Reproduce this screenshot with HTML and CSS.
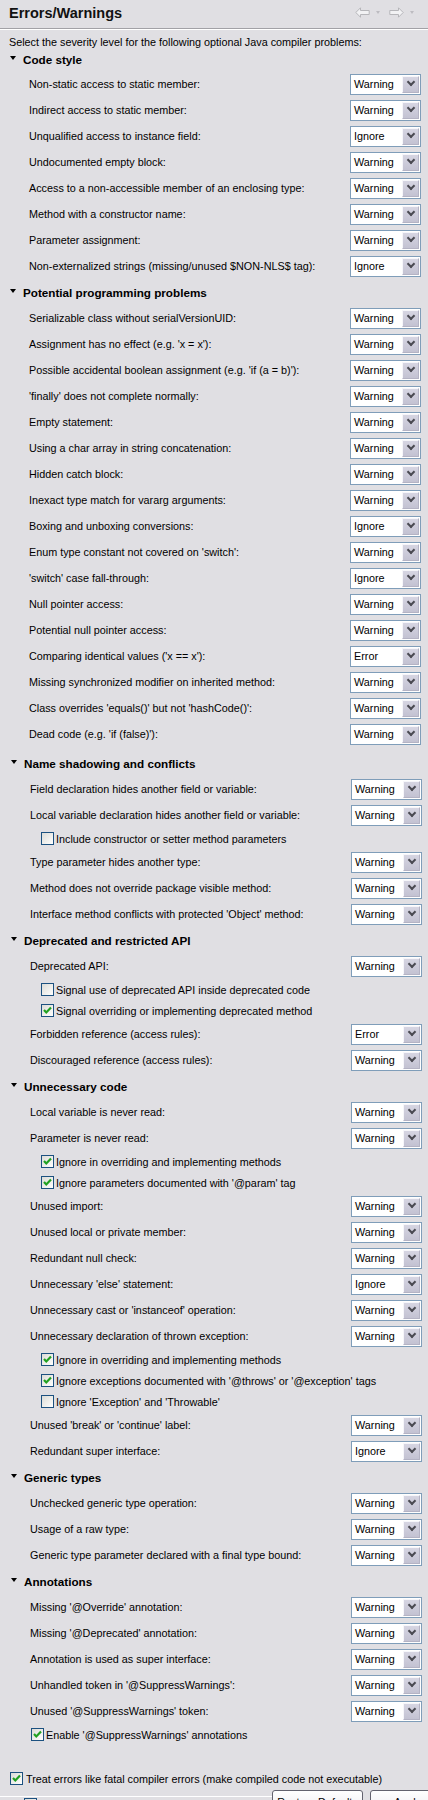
FILE: index.html
```html
<!DOCTYPE html>
<html lang="en">
<head>
<meta charset="utf-8">
<title>Errors/Warnings</title>
<link rel="stylesheet" href="styles.css">
</head>
<body>
<div class="page">
  <header class="titlebar">
    <h1 class="title">Errors/Warnings</h1>
    <div class="nav">
      <svg class="nav-arrow" width="15" height="11" viewBox="0 0 15 11"><path d="M0.8 5.5 L5.5 0.8 V3.5 H14.2 V7.5 H5.5 V10.2 Z" fill="#f2f2f4" stroke="#b6b6ba" stroke-width="1" stroke-linejoin="round"/></svg>
      <span class="nav-drop"></span>
      <svg class="nav-arrow nav-next" width="15" height="11" viewBox="0 0 15 11"><path d="M14.2 5.5 L9.5 0.8 V3.5 H0.8 V7.5 H9.5 V10.2 Z" fill="#f2f2f4" stroke="#b6b6ba" stroke-width="1" stroke-linejoin="round"/></svg>
      <span class="nav-drop"></span>
    </div>
  </header>

  <p class="intro">Select the severity level for the following optional Java compiler problems:</p>

  <section class="group first">
    <h2 class="group-title"><span class="twisty"></span>Code style</h2>
    <div class="row"><span class="label">Non-static access to static member:</span><span class="combo"><span class="combo-value">Warning</span><span class="combo-btn"></span></span></div>
    <div class="row"><span class="label">Indirect access to static member:</span><span class="combo"><span class="combo-value">Warning</span><span class="combo-btn"></span></span></div>
    <div class="row"><span class="label">Unqualified access to instance field:</span><span class="combo"><span class="combo-value">Ignore</span><span class="combo-btn"></span></span></div>
    <div class="row"><span class="label">Undocumented empty block:</span><span class="combo"><span class="combo-value">Warning</span><span class="combo-btn"></span></span></div>
    <div class="row"><span class="label">Access to a non-accessible member of an enclosing type:</span><span class="combo"><span class="combo-value">Warning</span><span class="combo-btn"></span></span></div>
    <div class="row"><span class="label">Method with a constructor name:</span><span class="combo"><span class="combo-value">Warning</span><span class="combo-btn"></span></span></div>
    <div class="row"><span class="label">Parameter assignment:</span><span class="combo"><span class="combo-value">Warning</span><span class="combo-btn"></span></span></div>
    <div class="row"><span class="label">Non-externalized strings (missing/unused $NON-NLS$ tag):</span><span class="combo"><span class="combo-value">Ignore</span><span class="combo-btn"></span></span></div>
  </section>

  <section class="group">
    <h2 class="group-title"><span class="twisty"></span>Potential programming problems</h2>
    <div class="row"><span class="label">Serializable class without serialVersionUID:</span><span class="combo"><span class="combo-value">Warning</span><span class="combo-btn"></span></span></div>
    <div class="row"><span class="label">Assignment has no effect (e.g. 'x = x'):</span><span class="combo"><span class="combo-value">Warning</span><span class="combo-btn"></span></span></div>
    <div class="row"><span class="label">Possible accidental boolean assignment (e.g. 'if (a = b)'):</span><span class="combo"><span class="combo-value">Warning</span><span class="combo-btn"></span></span></div>
    <div class="row"><span class="label">'finally' does not complete normally:</span><span class="combo"><span class="combo-value">Warning</span><span class="combo-btn"></span></span></div>
    <div class="row"><span class="label">Empty statement:</span><span class="combo"><span class="combo-value">Warning</span><span class="combo-btn"></span></span></div>
    <div class="row"><span class="label">Using a char array in string concatenation:</span><span class="combo"><span class="combo-value">Warning</span><span class="combo-btn"></span></span></div>
    <div class="row"><span class="label">Hidden catch block:</span><span class="combo"><span class="combo-value">Warning</span><span class="combo-btn"></span></span></div>
    <div class="row"><span class="label">Inexact type match for vararg arguments:</span><span class="combo"><span class="combo-value">Warning</span><span class="combo-btn"></span></span></div>
    <div class="row"><span class="label">Boxing and unboxing conversions:</span><span class="combo"><span class="combo-value">Ignore</span><span class="combo-btn"></span></span></div>
    <div class="row"><span class="label">Enum type constant not covered on 'switch':</span><span class="combo"><span class="combo-value">Warning</span><span class="combo-btn"></span></span></div>
    <div class="row"><span class="label">'switch' case fall-through:</span><span class="combo"><span class="combo-value">Ignore</span><span class="combo-btn"></span></span></div>
    <div class="row"><span class="label">Null pointer access:</span><span class="combo"><span class="combo-value">Warning</span><span class="combo-btn"></span></span></div>
    <div class="row"><span class="label">Potential null pointer access:</span><span class="combo"><span class="combo-value">Warning</span><span class="combo-btn"></span></span></div>
    <div class="row"><span class="label">Comparing identical values ('x == x'):</span><span class="combo"><span class="combo-value">Error</span><span class="combo-btn"></span></span></div>
    <div class="row"><span class="label">Missing synchronized modifier on inherited method:</span><span class="combo"><span class="combo-value">Warning</span><span class="combo-btn"></span></span></div>
    <div class="row"><span class="label">Class overrides 'equals()' but not 'hashCode()':</span><span class="combo"><span class="combo-value">Warning</span><span class="combo-btn"></span></span></div>
    <div class="row"><span class="label">Dead code (e.g. 'if (false)'):</span><span class="combo"><span class="combo-value">Warning</span><span class="combo-btn"></span></span></div>
  </section>

  <div class="shifted">
    <section class="group gap">
      <h2 class="group-title"><span class="twisty"></span>Name shadowing and conflicts</h2>
      <div class="row"><span class="label">Field declaration hides another field or variable:</span><span class="combo"><span class="combo-value">Warning</span><span class="combo-btn"></span></span></div>
      <div class="row"><span class="label">Local variable declaration hides another field or variable:</span><span class="combo"><span class="combo-value">Warning</span><span class="combo-btn"></span></span></div>
      <div class="check-row"><span class="cb"></span><span>Include constructor or setter method parameters</span></div>
      <div class="row"><span class="label">Type parameter hides another type:</span><span class="combo"><span class="combo-value">Warning</span><span class="combo-btn"></span></span></div>
      <div class="row"><span class="label">Method does not override package visible method:</span><span class="combo"><span class="combo-value">Warning</span><span class="combo-btn"></span></span></div>
      <div class="row"><span class="label">Interface method conflicts with protected 'Object' method:</span><span class="combo"><span class="combo-value">Warning</span><span class="combo-btn"></span></span></div>
    </section>

    <section class="group">
      <h2 class="group-title"><span class="twisty"></span>Deprecated and restricted API</h2>
      <div class="row"><span class="label">Deprecated API:</span><span class="combo"><span class="combo-value">Warning</span><span class="combo-btn"></span></span></div>
      <div class="check-row"><span class="cb"></span><span>Signal use of deprecated API inside deprecated code</span></div>
      <div class="check-row"><span class="cb"><svg class="tick" width="11" height="11" viewBox="0 0 11 11"><path d="M2 5 L4.3 7.5 L9 2.6" fill="none" stroke="#21a121" stroke-width="2.2"/></svg></span><span>Signal overriding or implementing deprecated method</span></div>
      <div class="row"><span class="label">Forbidden reference (access rules):</span><span class="combo"><span class="combo-value">Error</span><span class="combo-btn"></span></span></div>
      <div class="row"><span class="label">Discouraged reference (access rules):</span><span class="combo"><span class="combo-value">Warning</span><span class="combo-btn"></span></span></div>
    </section>

    <section class="group">
      <h2 class="group-title"><span class="twisty"></span>Unnecessary code</h2>
      <div class="row"><span class="label">Local variable is never read:</span><span class="combo"><span class="combo-value">Warning</span><span class="combo-btn"></span></span></div>
      <div class="row"><span class="label">Parameter is never read:</span><span class="combo"><span class="combo-value">Warning</span><span class="combo-btn"></span></span></div>
      <div class="check-row"><span class="cb"><svg class="tick" width="11" height="11" viewBox="0 0 11 11"><path d="M2 5 L4.3 7.5 L9 2.6" fill="none" stroke="#21a121" stroke-width="2.2"/></svg></span><span>Ignore in overriding and implementing methods</span></div>
      <div class="check-row"><span class="cb"><svg class="tick" width="11" height="11" viewBox="0 0 11 11"><path d="M2 5 L4.3 7.5 L9 2.6" fill="none" stroke="#21a121" stroke-width="2.2"/></svg></span><span>Ignore parameters documented with '@param' tag</span></div>
      <div class="row"><span class="label">Unused import:</span><span class="combo"><span class="combo-value">Warning</span><span class="combo-btn"></span></span></div>
      <div class="row"><span class="label">Unused local or private member:</span><span class="combo"><span class="combo-value">Warning</span><span class="combo-btn"></span></span></div>
      <div class="row"><span class="label">Redundant null check:</span><span class="combo"><span class="combo-value">Warning</span><span class="combo-btn"></span></span></div>
      <div class="row"><span class="label">Unnecessary 'else' statement:</span><span class="combo"><span class="combo-value">Ignore</span><span class="combo-btn"></span></span></div>
      <div class="row"><span class="label">Unnecessary cast or 'instanceof' operation:</span><span class="combo"><span class="combo-value">Warning</span><span class="combo-btn"></span></span></div>
      <div class="row"><span class="label">Unnecessary declaration of thrown exception:</span><span class="combo"><span class="combo-value">Warning</span><span class="combo-btn"></span></span></div>
      <div class="check-row"><span class="cb"><svg class="tick" width="11" height="11" viewBox="0 0 11 11"><path d="M2 5 L4.3 7.5 L9 2.6" fill="none" stroke="#21a121" stroke-width="2.2"/></svg></span><span>Ignore in overriding and implementing methods</span></div>
      <div class="check-row"><span class="cb"><svg class="tick" width="11" height="11" viewBox="0 0 11 11"><path d="M2 5 L4.3 7.5 L9 2.6" fill="none" stroke="#21a121" stroke-width="2.2"/></svg></span><span>Ignore exceptions documented with '@throws' or '@exception' tags</span></div>
      <div class="check-row"><span class="cb"></span><span>Ignore 'Exception' and 'Throwable'</span></div>
      <div class="row"><span class="label">Unused 'break' or 'continue' label:</span><span class="combo"><span class="combo-value">Warning</span><span class="combo-btn"></span></span></div>
      <div class="row"><span class="label">Redundant super interface:</span><span class="combo"><span class="combo-value">Ignore</span><span class="combo-btn"></span></span></div>
    </section>

    <section class="group">
      <h2 class="group-title"><span class="twisty"></span>Generic types</h2>
      <div class="row"><span class="label">Unchecked generic type operation:</span><span class="combo"><span class="combo-value">Warning</span><span class="combo-btn"></span></span></div>
      <div class="row"><span class="label">Usage of a raw type:</span><span class="combo"><span class="combo-value">Warning</span><span class="combo-btn"></span></span></div>
      <div class="row"><span class="label">Generic type parameter declared with a final type bound:</span><span class="combo"><span class="combo-value">Warning</span><span class="combo-btn"></span></span></div>
    </section>

    <section class="group">
      <h2 class="group-title"><span class="twisty"></span>Annotations</h2>
      <div class="row"><span class="label">Missing '@Override' annotation:</span><span class="combo"><span class="combo-value">Warning</span><span class="combo-btn"></span></span></div>
      <div class="row"><span class="label">Missing '@Deprecated' annotation:</span><span class="combo"><span class="combo-value">Warning</span><span class="combo-btn"></span></span></div>
      <div class="row"><span class="label">Annotation is used as super interface:</span><span class="combo"><span class="combo-value">Warning</span><span class="combo-btn"></span></span></div>
      <div class="row"><span class="label">Unhandled token in '@SuppressWarnings':</span><span class="combo"><span class="combo-value">Warning</span><span class="combo-btn"></span></span></div>
      <div class="row"><span class="label">Unused '@SuppressWarnings' token:</span><span class="combo"><span class="combo-value">Warning</span><span class="combo-btn"></span></span></div>
      <div class="check-row outer"><span class="cb"><svg class="tick" width="11" height="11" viewBox="0 0 11 11"><path d="M2 5 L4.3 7.5 L9 2.6" fill="none" stroke="#21a121" stroke-width="2.2"/></svg></span><span>Enable '@SuppressWarnings' annotations</span></div>
    </section>
  </div>

  <div class="check-row treat"><span class="cb"><svg class="tick" width="11" height="11" viewBox="0 0 11 11"><path d="M2 5 L4.3 7.5 L9 2.6" fill="none" stroke="#21a121" stroke-width="2.2"/></svg></span><span>Treat errors like fatal compiler errors (make compiled code not executable)</span></div>

  <div class="footer">
    <div class="footer-left">
      <div class="footer-line"></div>
      <div class="footer-check"><span class="cb"></span></div>
    </div>
    <button class="btn" type="button">Restore Defaults</button>
    <button class="btn btn-apply" type="button">Apply</button>
  </div>
</div>
</body>
</html>
```

FILE: styles.css
```css
html, body {
  margin: 0;
  padding: 0;
}

body {
  background: #e0dfe3;
  color: #000;
  font-family: "Liberation Sans", Arial, sans-serif;
  font-size: 10.8px;
  width: 428px;
  overflow: hidden;
}

.page {
  width: 428px;
}

/* ---------- title bar ---------- */
.titlebar {
  display: flex;
  align-items: center;
  height: 25px;
  padding: 0 14px 3px 9px;
  border-bottom: 1px solid #a2a1a6;
  box-shadow: 0 1px 0 #ffffff;
}

.title {
  margin: 0;
  font-size: 14.5px;
  font-weight: bold;
  line-height: 20px;
  color: #111;
}

.nav {
  margin-left: auto;
  display: flex;
  align-items: center;
}

.nav-arrow {
  display: block;
}

.nav-drop {
  width: 0;
  height: 0;
  border-top: 3px solid #bdbcc1;
  border-left: 2.5px solid transparent;
  border-right: 2.5px solid transparent;
  margin: 0 9px 0 6px;
}

.nav-drop:last-child {
  margin-right: 0;
}

/* ---------- intro ---------- */
.intro {
  margin: 1px 0 0;
  padding: 5px 0 0 9px;
  line-height: 14px;
}

/* ---------- groups ---------- */
.group-title {
  display: flex;
  align-items: center;
  height: 20px;
  margin: 3px 0;
  padding-left: 10px;
  font-size: 11.7px;
  font-weight: bold;
}

.group.first .group-title {
  margin: 0 0 2px;
}

.group.gap .group-title {
  margin-top: 6px;
}

.twisty {
  width: 0;
  height: 0;
  border-top: 4px solid #000;
  border-left: 3.5px solid transparent;
  border-right: 3.5px solid transparent;
  margin-right: 7px;
  transform: translateY(-1px);
}

.shifted {
  margin-left: 1px;
  margin-right: -1px;
}

/* ---------- rows with combo ---------- */
.row {
  display: flex;
  align-items: center;
  height: 26px;
  padding: 0 7px 0 29px;
}

.label {
  flex: 1;
  white-space: nowrap;
}

.combo {
  display: flex;
  align-items: stretch;
  width: 71px;
  height: 21px;
  box-sizing: border-box;
  border: 1px solid #7f9db9;
  background: #fff;
}

.combo-value {
  flex: 1;
  padding-left: 3px;
  line-height: 19px;
}

.combo-btn {
  width: 17px;
  margin: 1px;
  box-sizing: border-box;
  border: 1px solid #f6f6fa;
  border-right-color: #b4b3c4;
  border-bottom-color: #b4b3c4;
  background: linear-gradient(#d6d5e2, #c3c2d2);
  display: flex;
  align-items: center;
  justify-content: center;
}

.combo-btn::after {
  content: "";
  width: 4px;
  height: 4px;
  border-right: 2px solid #4a4a52;
  border-bottom: 2px solid #4a4a52;
  transform: translateY(-2px) rotate(45deg);
}

/* ---------- check rows ---------- */
.check-row {
  display: flex;
  align-items: center;
  height: 21px;
  padding-left: 40px;
  white-space: nowrap;
}

.check-row.outer {
  padding-left: 30px;
}

.check-row.treat {
  padding-left: 10px;
  margin-top: 23px;
}

.cb {
  width: 13px;
  height: 13px;
  box-sizing: border-box;
  border: 1px solid #1c5180;
  background: linear-gradient(135deg, #dcdcd7 0%, #f4f4f2 70%, #ffffff 100%);
  margin-right: 2px;
  flex: none;
  display: flex;
}

.check-row.treat .cb {
  margin-right: 3px;
}

.tick {
  display: block;
}

/* ---------- footer (clipped) ---------- */
.footer {
  display: flex;
  align-items: flex-start;
  height: 40px;
  margin-top: 1px;
}

.footer-left {
  width: 272px;
  flex: none;
}

.footer-line {
  height: 6px;
  border-bottom: 1px solid #ffffff;
}

.footer-check {
  padding: 1px 0 0 24px;
}

.btn {
  flex: none;
  width: 91px;
  height: 23px;
  margin: 0;
  padding: 0;
  border: 1px solid #62626e;
  border-radius: 3px;
  background: linear-gradient(#ffffff, #ecebf0);
  font-family: inherit;
  font-size: 10.8px;
  color: #000;
}

.btn-apply {
  width: 75px;
  margin-left: 7px;
}
```
